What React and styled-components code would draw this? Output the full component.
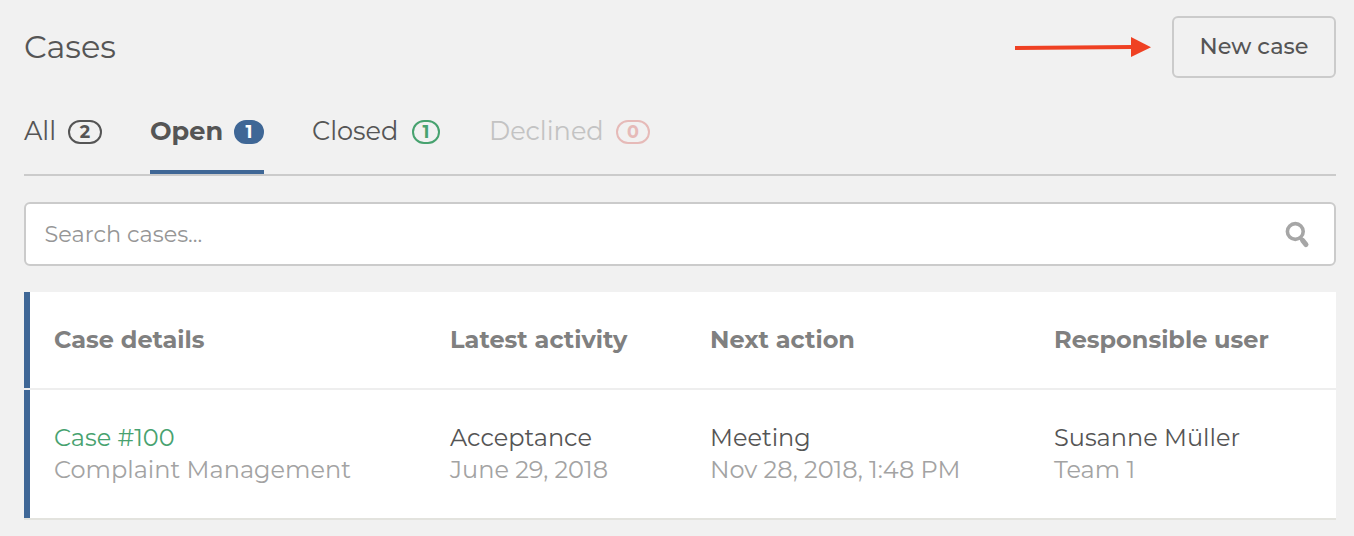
import styled, { createGlobalStyle } from "styled-components";

const COLORS = {
    BACKGROUND: "#f1f1f1",
    TEXT: "#555555",
    MUTED: "#a3a3a3",
    HEADING: "#808080",
    BORDER: "#cbcbcb",
    BLUE: "#3f6796",
    GREEN: "#47a26f",
    RED: "#e6bab8",
    DISABLED: "#c3c3c3",
    ARROW: "#ef4123",
}

const GlobalStyle = createGlobalStyle`
    * {
        box-sizing: border-box;
    }

    body {
        margin: 0;
        background: ${COLORS.BACKGROUND};
        color: ${COLORS.TEXT};
        font-family: Montserrat, Inter, sans-serif;
    }

    button, input {
        font-family: inherit;
    }
`

const Page = styled.main`
    width: 1354px;
    height: 536px;
    padding: 16px 18px 0 24px;
    overflow: hidden;
`

const Header = styled.header`
    display: flex;
    align-items: center;
    height: 62px;
`

const Title = styled.h1`
    margin: 0;
    font-size: 32px;
    font-weight: 400;
    line-height: 40px;
`

const Arrow = styled.svg`
    margin-left: auto;
    margin-right: 21px;
`

const NewCaseButton = styled.button`
    width: 164px;
    height: 62px;
    padding: 0 0 2px;
    border: 2px solid ${COLORS.BORDER};
    border-radius: 6px;
    background: transparent;
    color: ${COLORS.TEXT};
    font-size: 22.4px;
    font-weight: 500;
`

const Tabs = styled.nav`
    display: flex;
    gap: 48px;
    height: 98px;
    border-bottom: 2px solid ${COLORS.BORDER};
`

const Tab = styled.div`
    display: flex;
    align-items: flex-start;
    justify-content: space-between;
    width: ${(props) => props.$width}px;
    padding-top: 42px;
    border-bottom: 4px solid ${(props) => props.$active ? COLORS.BLUE : "transparent"};
    color: ${(props) => props.$disabled ? COLORS.DISABLED : COLORS.TEXT};

    &:last-child {
        margin-left: 1px;
    }
`

const TabLabel = styled.span`
    font-size: 25.6px;
    font-weight: ${(props) => props.$bold ? 700 : 400};
    line-height: 22px;
    white-space: nowrap;
`

const Badge = styled.span`
    display: flex;
    align-items: center;
    justify-content: center;
    width: ${(props) => props.$width}px;
    height: 24px;
    flex-shrink: 0;
    border: 2px solid ${(props) => props.$color};
    border-radius: 12px;
    background: ${(props) => props.$filled ? props.$color : "transparent"};
    color: ${(props) => props.$filled ? "white" : props.$color};
    font-size: 17.6px;
    font-weight: 700;
    line-height: 20px;
`

const SearchBox = styled.label`
    display: flex;
    align-items: center;
    height: 64px;
    margin: 26px 0;
    padding: 1px 23px 0 18.6px;
    border: 2px solid ${COLORS.BORDER};
    border-radius: 6px;
    background: white;
`

const SearchInput = styled.input`
    flex: 1;
    padding: 0 0 1px;
    border: none;
    outline: none;
    background: transparent;
    color: ${COLORS.TEXT};
    font-size: 22.4px;

    &::placeholder {
        color: #969696;
        opacity: 1;
    }
`

const Row = styled.div`
    display: grid;
    grid-template-columns: 396px 260px 344px 1fr;
    padding: 32px 0 32px 30px;
    border-bottom: 2px solid ${(props) => props.$line};
    background: linear-gradient(to right, ${COLORS.BLUE} 6px, white 6px) padding-box;
    font-size: 24px;
    line-height: 32px;
    white-space: nowrap;
`

const Text = styled.div`
    color: ${(props) => props.$color || COLORS.TEXT};
    font-weight: ${(props) => props.$bold ? 700 : 400};
`

const tabs = [
    { label: "All", count: 2, width: 78, badgeWidth: 34, color: COLORS.TEXT },
    { label: "Open", count: 1, width: 114, badgeWidth: 30, color: COLORS.BLUE, active: true },
    { label: "Closed", count: 1, width: 128, badgeWidth: 28, color: COLORS.GREEN },
    { label: "Declined", count: 0, width: 161, badgeWidth: 34, color: COLORS.RED, disabled: true },
]

const columns = ["Case details", "Latest activity", "Next action", "Responsible user"]

const cells = [
    { title: "Case #100", color: COLORS.GREEN, detail: "Complaint Management" },
    { title: "Acceptance", detail: "June 29, 2018" },
    { title: "Meeting", detail: "Nov 28, 2018, 1:48 PM" },
    { title: "Susanne Müller", detail: "Team 1" },
]

const App = () => {
    return (
        <>
            <GlobalStyle />
            <Page>
                <Header>
                    <Title>Cases</Title>
                    <Arrow width="136" height="20" viewBox="0 0 136 20" fill={COLORS.ARROW}>
                        <path d="M0 9.1 117 8.1v4L0 13z" />
                        <path d="M116 0 136 10.2 116 20z" />
                    </Arrow>
                    <NewCaseButton>New case</NewCaseButton>
                </Header>
                <Tabs>
                    {tabs.map((tab) => (
                        <Tab key={tab.label} $width={tab.width} $active={tab.active} $disabled={tab.disabled}>
                            <TabLabel $bold={tab.active}>{tab.label}</TabLabel>
                            <Badge $width={tab.badgeWidth} $color={tab.color} $filled={tab.active}>{tab.count}</Badge>
                        </Tab>
                    ))}
                </Tabs>
                <SearchBox>
                    <SearchInput placeholder="Search cases..." />
                    <svg width="26" height="28" viewBox="0 0 26 28" fill="none" stroke="#a6a6a6">
                        <circle cx="10.3" cy="10.5" r="7.9" strokeWidth="3.6" />
                        <path d="M15 16.5 17 18.7" strokeWidth="3.4" />
                        <path d="M17.6 19.4 21 23.6" strokeWidth="5" strokeLinecap="round" />
                    </svg>
                </SearchBox>
                <Row $line="#eeeeee">
                    {columns.map((column) => (
                        <Text key={column} $bold $color={COLORS.HEADING}>{column}</Text>
                    ))}
                </Row>
                <Row $line="#e3e3de">
                    {cells.map((cell) => (
                        <div key={cell.title}>
                            <Text $color={cell.color}>{cell.title}</Text>
                            <Text $color={COLORS.MUTED}>{cell.detail}</Text>
                        </div>
                    ))}
                </Row>
            </Page>
        </>
    )
}

export default App
